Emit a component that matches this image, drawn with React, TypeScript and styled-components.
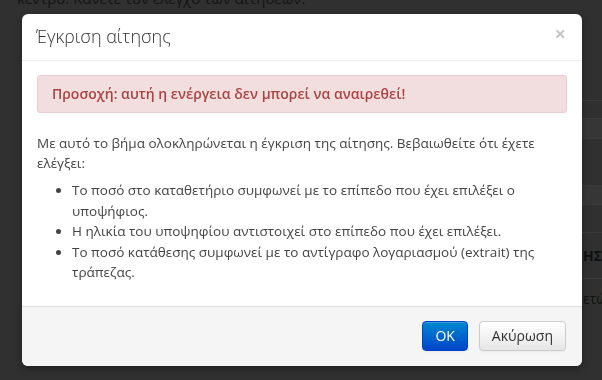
import * as React from "react";
import styled, { createGlobalStyle } from "styled-components";

const GlobalStyle = createGlobalStyle`
  html, body {
    margin: 0;
    padding: 0;
    background: #303030;
    font-family: "Open Sans", "Noto Sans", sans-serif;
  }
  * { box-sizing: border-box; }
`;

const rows = [
  { h: 18, bg: "#303030" },
  { h: 20, bg: "#363636" },
  { h: 47, bg: "#303030" },
  { h: 19, bg: "#363636" },
  { h: 28, bg: "#303030" },
  { h: 46, bg: "#303030", text: "ΗΣ", bold: true },
  { h: 40, bg: "#303030", text: "ετώ" },
];

export default function App() {
  return (
    <>
      <GlobalStyle />
      <Page>
        <TopText>κέντρο. Κάνετε τον έλεγχο των αιτήσεων.</TopText>
        <Table>
          {rows.map((r, i) => (
            <TableRow key={i} $bg={r.bg} style={{ height: r.h }}>
              {r.text && <Cell $bold={r.bold}>{r.text}</Cell>}
            </TableRow>
          ))}
        </Table>
      </Page>
      <Modal>
        <Header>
          <Title>Έγκριση αίτησης</Title>
          <Close>×</Close>
        </Header>
        <Body>
          <Alert>Προσοχή: αυτή η ενέργεια δεν μπορεί να αναιρεθεί!</Alert>
          <Paragraph>
            Με αυτό το βήμα ολοκληρώνεται η έγκριση της αίτησης. Βεβαιωθείτε ότι
            έχετε ελέγξει:
          </Paragraph>
          <List>
            <li>
              Το ποσό στο καταθετήριο συμφωνεί με το επίπεδο που έχει επιλέξει ο
              υποψήφιος.
            </li>
            <li>Η ηλικία του υποψηφίου αντιστοιχεί στο επίπεδο που έχει επιλέξει.</li>
            <li>
              Το ποσό κατάθεσης συμφωνεί με το αντίγραφο λογαριασμού (extrait) της
              τράπεζας.
            </li>
          </List>
        </Body>
        <Footer>
          <Button $primary>OK</Button>
          <Button>Ακύρωση</Button>
        </Footer>
      </Modal>
    </>
  );
}

const Page = styled.div`
  position: relative;
  width: 602px;
  height: 380px;
  overflow: hidden;
  background: #303030;
`;

const TopText = styled.div`
  margin: -12px 0 0 17px;
  font-size: 15px;
  line-height: 20px;
  color: #141414;
`;

const Table = styled.div`
  margin: 92px 0 0 582px;
  display: flex;
  flex-direction: column;
`;

const TableRow = styled.div<{ $bg: string }>`
  background: ${(p) => p.$bg};
  border-top: 1px solid #3b3b3b;
  display: flex;
  align-items: center;
`;

const Cell = styled.span<{ $bold?: boolean }>`
  font-size: 14px;
  font-weight: ${(p) => (p.$bold ? 700 : 400)};
  color: #111;
  padding-left: 1px;
  white-space: nowrap;
  overflow: hidden;
`;

const Modal = styled.div`
  position: fixed;
  top: 14px;
  left: 22px;
  width: 560px;
  background: #fff;
  border-radius: 6px;
  box-shadow: 0 3px 7px rgba(0, 0, 0, 0.3);
  overflow: hidden;
`;

const Header = styled.div`
  display: flex;
  align-items: center;
  justify-content: space-between;
  height: 47px;
  padding: 0 16px 2px 14px;
  border-bottom: 1px solid #eee;
`;

const Title = styled.h3`
  margin: 0;
  font-size: 18px;
  font-weight: 300;
  color: #333;
`;

const Close = styled.span`
  font-size: 20px;
  font-weight: 700;
  line-height: 20px;
  color: #c6c6c6;
  margin-top: -4px;
`;

const Body = styled.div`
  padding: 14px 15px 15px;
  color: #555;
  font-size: 13.5px;
  line-height: 20px;
`;

const Alert = styled.div`
  background: #f2dede;
  border: 1px solid #ebccd1;
  border-radius: 3px;
  color: #a94442;
  font-weight: 600;
  font-size: 14px;
  padding: 8px 14px;
  line-height: 20px;
`;

const Paragraph = styled.p`
  margin: 20px 0 7px;
  color: #444;
`;

const List = styled.ul`
  margin: 0 0 8px;
  padding-left: 35px;
  color: #444;
  li {
    line-height: 20.5px;
  }
`;

const Footer = styled.div`
  display: flex;
  justify-content: flex-end;
  gap: 11px;
  padding: 14px 16px 15px;
  background: #f5f5f5;
  border-top: 1px solid #ddd;
`;

const Button = styled.button<{ $primary?: boolean }>`
  height: 30px;
  padding: 0 12px;
  border-radius: 4px;
  font-family: inherit;
  font-size: 14px;
  cursor: pointer;
  color: ${(p) => (p.$primary ? "#fff" : "#333")};
  border: 1px solid ${(p) => (p.$primary ? "#0044cc" : "#ccc")};
  background: ${(p) =>
    p.$primary
      ? "linear-gradient(to bottom, #0088cc, #0044cc)"
      : "linear-gradient(to bottom, #fff, #e6e6e6)"};
  box-shadow: inset 0 1px 0 rgba(255, 255, 255, 0.2), 0 1px 2px rgba(0, 0, 0, 0.05);
`;
